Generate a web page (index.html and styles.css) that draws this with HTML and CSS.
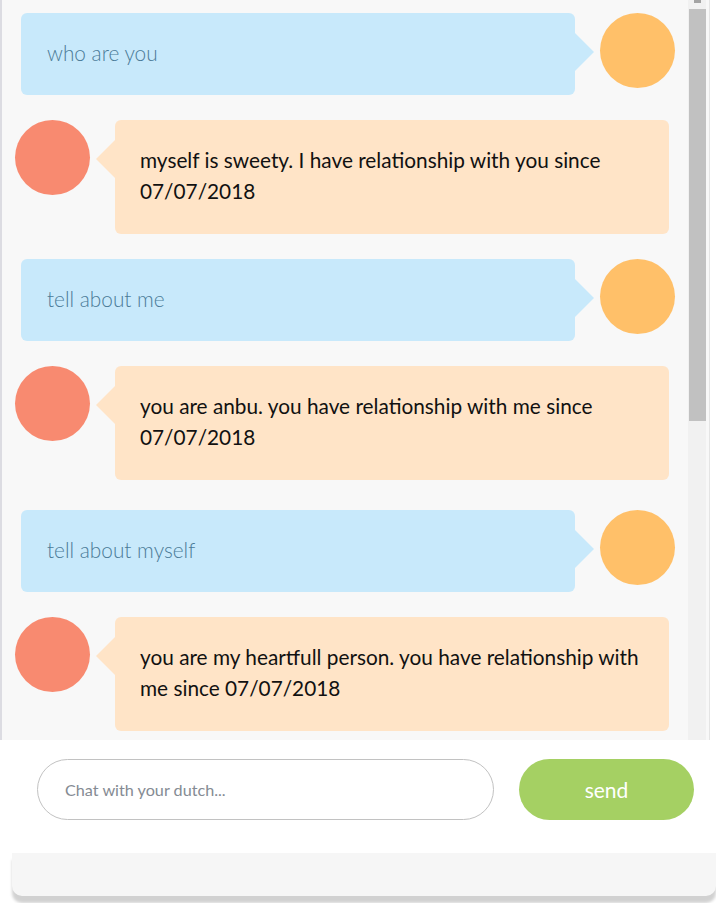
FILE: index.html
```html
<!DOCTYPE html>
<html lang="en">
<head>
<meta charset="utf-8">
<title>Chat</title>
<link rel="stylesheet" href="styles.css">
</head>
<body>
<div class="app">
  <div class="panel">
    <div class="chat">
      <div class="row user">
        <div class="bubble">who are you</div>
        <div class="avatar"></div>
      </div>
      <div class="row bot">
        <div class="avatar"></div>
        <div class="bubble">myself is sweety. I have relationship with you since 07/07/2018</div>
      </div>
      <div class="row user">
        <div class="bubble">tell about me</div>
        <div class="avatar"></div>
      </div>
      <div class="row bot">
        <div class="avatar"></div>
        <div class="bubble">you are anbu. you have relationship with me since 07/07/2018</div>
      </div>
      <div class="row user later">
        <div class="bubble">tell about myself</div>
        <div class="avatar"></div>
      </div>
      <div class="row bot">
        <div class="avatar"></div>
        <div class="bubble">you are my heartfull person. you have relationship with me since 07/07/2018</div>
      </div>
    </div>
    <div class="scrollbar">
      <div class="scroll-up"></div>
      <div class="scroll-thumb"></div>
    </div>
  </div>
  <div class="composer">
    <input class="input" type="text" placeholder="Chat with your dutch..." autofocus>
    <button class="send" type="button">send</button>
  </div>
  <div class="footer"></div>
</div>
</body>
</html>
```
FILE: styles.css
```css
* { box-sizing: border-box; }

html, body {
  margin: 0;
  padding: 0;
  background: #ffffff;
}

body {
  font-family: Lato, "Open Sans", sans-serif;
  overflow: hidden;
}

.app {
  width: 716px;
  height: 903px;
}

.panel {
  display: flex;
  width: 710px;
  height: 740px;
  background: #f8f8f8;
  border-left: 2px solid #dcdce2;
  border-right: 1px solid #e4e4e4;
  padding-right: 3px;
}

.chat {
  flex: 1;
  height: 740px;
  overflow: hidden;
  display: flex;
  flex-direction: column;
  gap: 25px;
  padding: 13px 0 0 0;
}

.scrollbar {
  width: 18px;
  height: 740px;
  background: #f1f1f1;
  flex-shrink: 0;
}

.scroll-up {
  height: 9px;
  background: linear-gradient(#a3a3a3, #a3a3a3) 6px 0 / 7px 3px no-repeat;
}

.scroll-thumb {
  margin-left: 1px;
  height: 412px;
  background: #c1c1c1;
}

.row {
  display: flex;
  align-items: flex-start;
  gap: 25px;
  flex-shrink: 0;
}

.row.user {
  padding: 0 13px 0 19px;
}

.row.bot {
  padding: 0 19px 0 13px;
}

.row.later {
  margin-top: 5px;
}

.avatar {
  width: 75px;
  height: 75px;
  border-radius: 50%;
  flex-shrink: 0;
}

.user .avatar { background: #ffc069; }
.bot .avatar { background: #f88a70; }

.bubble {
  position: relative;
  flex: 1;
  border-radius: 6px;
  padding: 24px 25px 27px 26px;
  font-size: 20.8px;
  line-height: 31px;
}

.bubble::after {
  content: "";
  position: absolute;
  top: 20px;
  width: 0;
  height: 0;
  border-top: 19px solid transparent;
  border-bottom: 19px solid transparent;
}

.user .bubble {
  background: #c8e9fb;
  color: #4b7b98;
  font-weight: 300;
}

.user .bubble::after {
  right: -19px;
  border-left: 19px solid #c8e9fb;
}

.bot .bubble {
  background: #ffe4c7;
  color: #111111;
  padding: 24px 20px 28px 25px;
}

.bot .bubble::after {
  left: -19px;
  border-right: 19px solid #ffe4c7;
}

.composer {
  height: 113px;
  display: flex;
  align-items: flex-start;
  gap: 25px;
  padding: 19px 0 0 37px;
}

.input {
  width: 457px;
  height: 61px;
  border: 1px solid #c2c2c2;
  border-radius: 31px;
  padding: 0 0 0 27px;
  font-family: Lato, "Open Sans", sans-serif;
  font-size: 16.2px;
  color: #222;
  background: #fff;
  outline: none;
  caret-color: #000;
}

.input::placeholder {
  color: #858b93;
}

.send {
  width: 175px;
  height: 61px;
  border: none;
  border-radius: 31px;
  background: #a5d063;
  color: #ffffff;
  font-family: Lato, "Open Sans", sans-serif;
  font-size: 21px;
  font-weight: 400;
  cursor: pointer;
}

.footer {
  margin-left: 12px;
  width: 704px;
  height: 43px;
  background: #f6f6f6;
  border-radius: 0 0 10px 10px;
  box-shadow: 0 7px 3px rgba(0, 0, 0, 0.18);
}
```
